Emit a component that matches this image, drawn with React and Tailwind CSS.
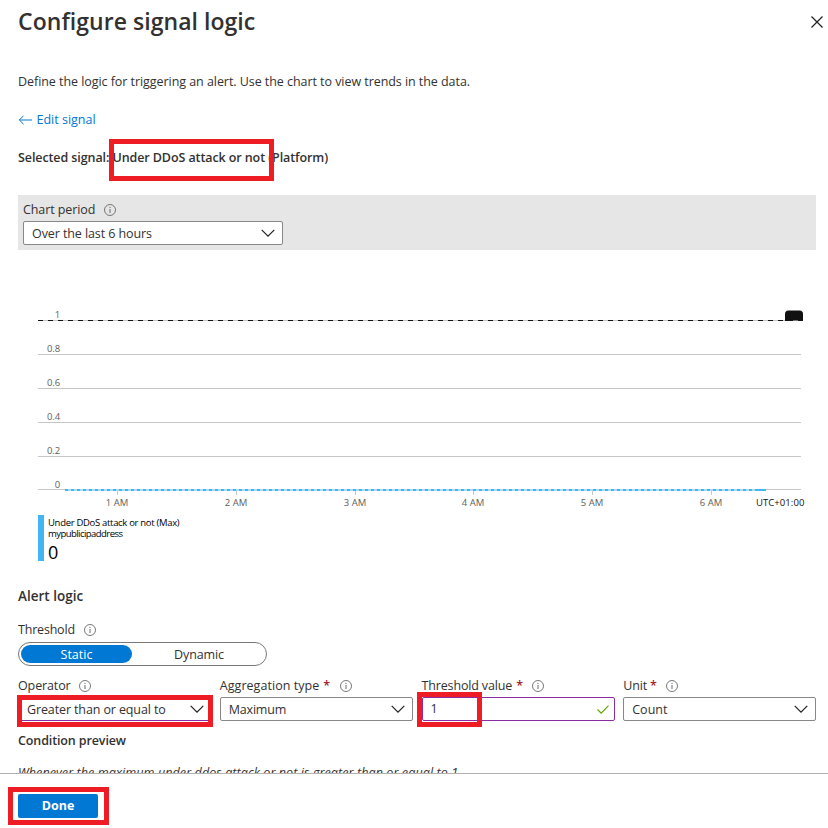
const yTicks = [
  { label: '1', y: 20 },
  { label: '0.8', y: 54 },
  { label: '0.6', y: 88 },
  { label: '0.4', y: 122 },
  { label: '0.2', y: 156 },
  { label: '0', y: 189 },
];

const xTicks = [
  { label: '1 AM', x: 79 },
  { label: '2 AM', x: 198 },
  { label: '3 AM', x: 317 },
  { label: '4 AM', x: 435 },
  { label: '5 AM', x: 554 },
  { label: '6 AM', x: 673 },
];

function InfoIcon() {
  return (
    <svg className="-mt-px h-3 w-3 shrink-0" viewBox="0 0 12 12" fill="none">
      <circle cx="6" cy="6" r="5.500" stroke="#6b6a69" strokeWidth="0.9" />
      <path d="M6 5V9" stroke="#6b6a69" strokeWidth="1" />
      <path d="M6 2.900V4" stroke="#6b6a69" strokeWidth="1" />
    </svg>
  );
}

function Chevron() {
  return (
    <svg className="h-2 w-[14px] shrink-0" viewBox="0 0 14 8" fill="none">
      <path d="M0.7 0.8L7 7.1L13.3 0.8" stroke="#201f1e" strokeWidth="1.2" />
    </svg>
  );
}

function Select({ children, className = 'border-[#8a8886]', pad = 'pr-[7px]' }) {
  return (
    <div className={`flex h-6 items-center justify-between rounded-[2px] border bg-white pl-2 ${pad} ${className}`}>
      <div className="pt-px">{children}</div>
      <Chevron />
    </div>
  );
}

function Label({ children, required, gap = 'gap-[9px]' }) {
  return (
    <div className={`flex h-5 items-center ${gap}`}>
      <span className="flex gap-1">
        {children}
        {required && <span className="font-semibold text-[#a4262c]">*</span>}
      </span>
      <InfoIcon />
    </div>
  );
}

function MetricChart() {
  return (
    <svg className="block h-[215px] w-[770px]" viewBox="0 0 770 215">
      {yTicks.map((t) => (
        <g key={t.label}>
          <rect x="0" y={t.y} width="763" height="1" fill="#c8c6c4" />
          <text x="22.300" y={t.label === '0' ? 188 : t.y - 2} textAnchor="end" fontSize="9.5" fill="#605e5c">{t.label}</text>
        </g>
      ))}
      {xTicks.map((t) => (
        <g key={t.label}>
          <rect x={t.x} y="190" width="1" height="5" fill="#c8c6c4" />
          <text x={t.x} y="206" textAnchor="middle" fontSize="9.5" fill="#605e5c">{t.label}</text>
        </g>
      ))}
      <path d="M0 20.5H763" stroke="#111111" strokeWidth="1" strokeDasharray="5 5" />
      <path d="M747 21V14Q747 10.5 750.5 10.5H761.500Q765 10.500 765 14V21Z" fill="#111111" />
      <path d="M755 20.500H760" stroke="#777777" strokeWidth="1" />
      <path d="M27 190H718" stroke="#a6dcf9" strokeWidth="2" />
      <path d="M27 190H718" stroke="#41b6f2" strokeWidth="2" strokeDasharray="3 3" />
      <path d="M717 190H728" stroke="#41b6f2" strokeWidth="2" />
      <text x="718" y="206" fontSize="9.5" letterSpacing="0.07" fill="#111111">UTC+01:00</text>
    </svg>
  );
}

export default function App() {
  return (
    <div className="relative flex h-[828px] w-[828px] flex-col overflow-hidden bg-white font-['Open_Sans','Noto_Sans',sans-serif] text-[12.5px] leading-5 whitespace-nowrap text-[#323130]">
      <main className="h-[773px] overflow-hidden pr-3 pl-[18px]">
        <header className="-mr-3 flex h-11 items-center justify-between pr-[5px]">
          <h1 className="-mt-[2px] text-[23px] leading-8 font-semibold tracking-[0.05px]">Configure signal logic</h1>
          <svg className="h-3 w-3" viewBox="0 0 12 12" fill="none">
            <path d="M0.5 0.5L11.500 11.500M11.500 0.500L0.500 11.500" stroke="#201f1e" strokeWidth="1.2" />
          </svg>
        </header>

        <p className="mt-[28px] tracking-[-0.055px]">Define the logic for triggering an alert. Use the chart to view trends in the data.</p>
        <a className="mt-[18px] flex items-center gap-[3.5px] text-[#0078d4]">
          <svg className="h-[10px] w-[15px]" viewBox="0 0 15 10" fill="none">
            <path d="M14 5H1.500M5.500 0.800L1.300 5L5.500 9.200" stroke="#0078d4" strokeWidth="1" />
          </svg>
          Edit signal
        </a>
        <p className="mt-[18px] font-semibold tracking-[-0.09px]">Selected signal: Under DDoS attack or not (Platform)</p>

        <section className="mt-[27px] h-[55px] bg-[#e6e6e6] pt-[5px] pl-[5px]">
          <Label><span className="tracking-[-0.1px]">Chart period</span></Label>
          <div className="mt-px w-[260px]">
            <Select><span className="tracking-[-0.09px]">Over the last 6 hours</span></Select>
          </div>
        </section>

        <section className="mt-[50px] ml-5 h-[265px]">
          <MetricChart />
          <div className="flex h-[46px] gap-[4.5px] leading-none text-black">
            <div className="w-[5.5px] bg-[#41b6f2]" />
            <div>
              <div className="mt-[2px] h-[11px] text-[9.5px] leading-[11px] tracking-[-0.31px]">Under DDoS attack or not (Max)</div>
              <div className="h-[11px] text-[9.5px] leading-[11px] tracking-[-0.55px]">mypublicipaddress</div>
              <div className="mt-[3px] h-5 text-[18px] leading-5 font-medium">0</div>
            </div>
          </div>
        </section>

        <h2 className="mt-[21px] text-[13.5px] font-semibold">Alert logic</h2>
        <div className="mt-[14px]">
          <Label><span className="tracking-[-0.2px]">Threshold</span></Label>
        </div>
        <div className="mt-[2px] flex h-6 w-[249px] items-center rounded-full border border-[#7a7876] p-[2px] text-center">
          <div className="h-[18px] w-[111px] rounded-full bg-[#0078d4] leading-[19px] text-white">Static</div>
          <div className="flex-1 pt-px pl-[2px] leading-[19px] tracking-[-0.1px]">Dynamic</div>
        </div>

        <section className="mt-[10px] grid grid-cols-4 gap-[9px]">
          <div>
            <Label gap="gap-2"><span className="tracking-[-0.12px]">Operator</span></Label>
            <div className="mt-px">
              <Select pad="pr-[6px]" className="border-[#8a2da5]"><span className="tracking-[-0.12px]">Greater than or equal to</span></Select>
            </div>
          </div>
          <div>
            <Label required gap="gap-[10px]"><span className="tracking-[0.05px]">Aggregation type</span></Label>
            <div className="mt-px">
              <Select><span className="tracking-[-0.2px]">Maximum</span></Select>
            </div>
          </div>
          <div>
            <Label required gap="gap-[9px]"><span className="tracking-[-0.15px]">Threshold value</span></Label>
            <div className="-mr-px mt-px flex h-6 items-center justify-between rounded-[2px] border border-[#8a2da5] bg-white pr-[5px] pl-2">
              <span>1</span>
              <svg className="h-[9px] w-3" viewBox="0 0 12 9" fill="none">
                <path d="M0.500 4.500L4.200 8.200L11.500 0.700" stroke="#57a300" strokeWidth="1.1" />
              </svg>
            </div>
          </div>
          <div>
            <Label required gap="gap-[9px]"><span className="-mr-px tracking-[-0.15px]">Unit</span></Label>
            <div className="mt-px">
              <Select>Count</Select>
            </div>
          </div>
        </section>

        <h2 className="mt-[10px] font-semibold tracking-[-0.12px]">Condition preview</h2>
        <p className="mt-3 tracking-[0.1px] italic">Whenever the maximum under ddos attack or not is greater than or equal to 1</p>
      </main>

      <footer className="h-[55px] border-t border-[#b3b0ad] pt-5 pl-[18px]">
        <button className="block h-6 w-20 rounded-[2px] bg-[#0078d4] text-center font-bold text-white">Done</button>
      </footer>

      <div className="absolute top-[139px] left-[109px] h-[42px] w-[165px] border-[5px] border-[#ee1c25]" />
      <div className="absolute top-[695px] left-[17px] h-8 w-[196px] border-[5px] border-[#ee1c25]" />
      <div className="absolute top-[692px] left-[417px] h-[35px] w-[65px] border-[5px] border-[#ee1c25]" />
      <div className="absolute top-[787px] left-2 h-[38px] w-[101px] border-[5px] border-[#ee1c25]" />
    </div>
  );
}
